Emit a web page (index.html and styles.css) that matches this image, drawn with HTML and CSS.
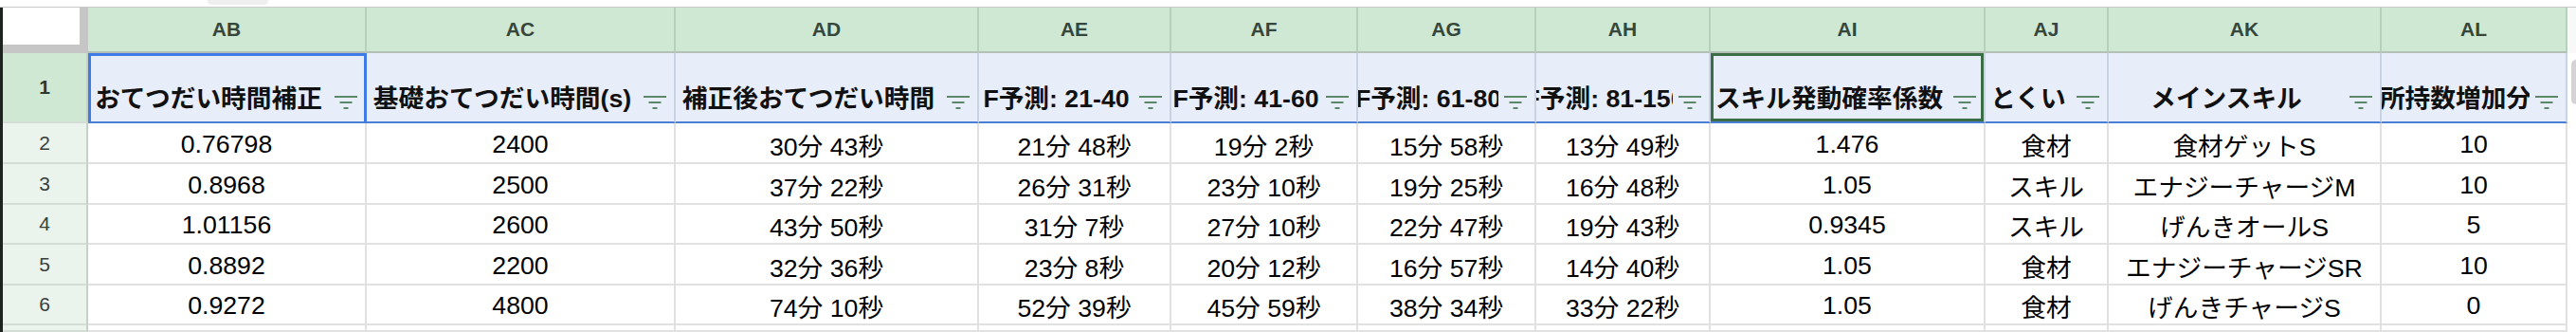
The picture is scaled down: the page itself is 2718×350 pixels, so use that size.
FILE: index.html
```html
<!DOCTYPE html>
<html lang="ja">
<head>
<meta charset="utf-8">
<title>Sheet</title>
<link rel="stylesheet" href="styles.css">
</head>
<body>
<div class="top"><div class="tab"></div></div>
<div class="sheet">
  <div class="corner"><div class="corner-box"></div></div>
  <div class="colh">AB</div>
  <div class="colh">AC</div>
  <div class="colh">AD</div>
  <div class="colh">AE</div>
  <div class="colh">AF</div>
  <div class="colh">AG</div>
  <div class="colh">AH</div>
  <div class="colh">AI</div>
  <div class="colh">AJ</div>
  <div class="colh">AK</div>
  <div class="colh">AL</div>
  <div class="colh edge"></div>

  <div class="rowh sel">1</div>
  <div class="hcell active"><div class="label"><span>おてつだい時間補正</span></div><svg class="filt" viewBox="0 0 24 14" width="24" height="14"><path d="M0 1h24M5.5 7h13M9.5 13h5"/></svg></div>
  <div class="hcell"><div class="label"><span>基礎おてつだい時間(s)</span></div><svg class="filt" viewBox="0 0 24 14" width="24" height="14"><path d="M0 1h24M5.5 7h13M9.5 13h5"/></svg></div>
  <div class="hcell"><div class="label"><span>補正後おてつだい時間</span></div><svg class="filt" viewBox="0 0 24 14" width="24" height="14"><path d="M0 1h24M5.5 7h13M9.5 13h5"/></svg></div>
  <div class="hcell"><div class="label"><span>F予測: 21-40</span></div><svg class="filt" viewBox="0 0 24 14" width="24" height="14"><path d="M0 1h24M5.5 7h13M9.5 13h5"/></svg></div>
  <div class="hcell"><div class="label"><span>F予測: 41-60</span></div><svg class="filt" viewBox="0 0 24 14" width="24" height="14"><path d="M0 1h24M5.5 7h13M9.5 13h5"/></svg></div>
  <div class="hcell"><div class="label"><span>F予測: 61-80</span></div><svg class="filt" viewBox="0 0 24 14" width="24" height="14"><path d="M0 1h24M5.5 7h13M9.5 13h5"/></svg></div>
  <div class="hcell"><div class="label"><span>F予測: 81-150</span></div><svg class="filt" viewBox="0 0 24 14" width="24" height="14"><path d="M0 1h24M5.5 7h13M9.5 13h5"/></svg></div>
  <div class="hcell focus"><div class="label"><span>スキル発動確率係数</span></div><svg class="filt" viewBox="0 0 24 14" width="24" height="14"><path d="M0 1h24M5.5 7h13M9.5 13h5"/></svg></div>
  <div class="hcell"><div class="label"><span>とくい</span></div><svg class="filt" viewBox="0 0 24 14" width="24" height="14"><path d="M0 1h24M5.5 7h13M9.5 13h5"/></svg></div>
  <div class="hcell"><div class="label"><span>メインスキル</span></div><svg class="filt" viewBox="0 0 24 14" width="24" height="14"><path d="M0 1h24M5.5 7h13M9.5 13h5"/></svg></div>
  <div class="hcell"><div class="label"><span>所持数増加分</span></div><svg class="filt" viewBox="0 0 24 14" width="24" height="14"><path d="M0 1h24M5.5 7h13M9.5 13h5"/></svg></div>
  <div class="hcell edge"><div class="scroll"></div></div>

  <div class="rowh">2</div>
  <div class="cell">0.76798</div><div class="cell">2400</div><div class="cell">30分 43秒</div><div class="cell">21分 48秒</div><div class="cell">19分 2秒</div><div class="cell">15分 58秒</div><div class="cell">13分 49秒</div><div class="cell">1.476</div><div class="cell">食材</div><div class="cell">食材ゲットS</div><div class="cell">10</div><div class="cell edge"></div>

  <div class="rowh">3</div>
  <div class="cell">0.8968</div><div class="cell">2500</div><div class="cell">37分 22秒</div><div class="cell">26分 31秒</div><div class="cell">23分 10秒</div><div class="cell">19分 25秒</div><div class="cell">16分 48秒</div><div class="cell">1.05</div><div class="cell">スキル</div><div class="cell">エナジーチャージM</div><div class="cell">10</div><div class="cell edge"></div>

  <div class="rowh">4</div>
  <div class="cell">1.01156</div><div class="cell">2600</div><div class="cell">43分 50秒</div><div class="cell">31分 7秒</div><div class="cell">27分 10秒</div><div class="cell">22分 47秒</div><div class="cell">19分 43秒</div><div class="cell">0.9345</div><div class="cell">スキル</div><div class="cell">げんきオールS</div><div class="cell">5</div><div class="cell edge"></div>

  <div class="rowh">5</div>
  <div class="cell">0.8892</div><div class="cell">2200</div><div class="cell">32分 36秒</div><div class="cell">23分 8秒</div><div class="cell">20分 12秒</div><div class="cell">16分 57秒</div><div class="cell">14分 40秒</div><div class="cell">1.05</div><div class="cell">食材</div><div class="cell">エナジーチャージSR</div><div class="cell">10</div><div class="cell edge"></div>

  <div class="rowh">6</div>
  <div class="cell">0.9272</div><div class="cell">4800</div><div class="cell">74分 10秒</div><div class="cell">52分 39秒</div><div class="cell">45分 59秒</div><div class="cell">38分 34秒</div><div class="cell">33分 22秒</div><div class="cell">1.05</div><div class="cell">食材</div><div class="cell">げんきチャージS</div><div class="cell">0</div><div class="cell edge"></div>

  <div class="rowh"></div>
  <div class="cell"></div><div class="cell"></div><div class="cell"></div><div class="cell"></div><div class="cell"></div><div class="cell"></div><div class="cell"></div><div class="cell"></div><div class="cell"></div><div class="cell"></div><div class="cell"></div><div class="cell edge"></div>
</div>
</body>
</html>
```

FILE: styles.css
```css
* { box-sizing: border-box; }

body {
  margin: 0;
  width: 2718px;
  height: 350px;
  overflow: hidden;
  background: #ffffff;
  font-family: "Liberation Sans", "Noto Sans CJK JP", sans-serif;
}

.top {
  height: 8px;
  display: flex;
  border-bottom: 1px solid #c9cbc9;
}

.tab {
  margin-left: 219px;
  width: 64px;
  height: 5px;
  background: #efefef;
  border-radius: 0 0 4px 4px;
}

.sheet {
  display: grid;
  grid-template-columns: 90px 294px 326px 320px 203px 197px 188px 184px 290px 130px 288px 196px 9px;
  grid-template-rows: 48px 74px 43px 43px 42px 43px 42px 7px;
  border-left: 3px solid #1d2420;
  height: 342px;
}

.corner {
  background: #c6c6c6;
}

.corner-box {
  width: 81px;
  height: 39px;
  background: #ffffff;
}

.colh {
  background: #cfe8d4;
  border-right: 2px solid #b9cfbd;
  border-bottom: 2px solid #b3c0b6;
  display: flex;
  align-items: center;
  justify-content: center;
  font-weight: bold;
  font-size: 21px;
  color: #36463a;
}

.colh.edge {
  background: #f7f8f7;
  border: none;
}

.rowh {
  background: #eaf4ec;
  border-right: 2px solid #c6d0c8;
  border-bottom: 2px solid #d3dcd5;
  display: flex;
  align-items: center;
  justify-content: center;
  font-size: 21px;
  color: #3a403c;
}

.rowh.sel {
  background: #cfe8d4;
  font-weight: bold;
  color: #2c3a30;
}

.hcell {
  background: #e8eef9;
  border-right: 2px solid #cad3e3;
  border-bottom: 2px solid #4a7fd6;
  display: flex;
  align-items: flex-end;
  font-weight: bold;
  font-size: 26.7px;
  color: #111111;
}

.hcell.active {
  border-right-color: #3f7be4;
  box-shadow: inset 3px 3px 0 #3f7be4, inset -1px 0 0 #3f7be4;
}

.hcell.focus {
  box-shadow: inset 0 0 0 3px #3b6e46;
}

.label {
  flex: 1;
  min-width: 0;
  display: flex;
  justify-content: center;
  overflow: hidden;
  line-height: 34px;
  padding-bottom: 7px;
}

.label span {
  white-space: nowrap;
  flex-shrink: 0;
}

.filt {
  flex-shrink: 0;
  margin: 0 8px 13px 6px;
  stroke: #5b8868;
  stroke-width: 2;
  fill: none;
}

.hcell.edge {
  background: #ffffff;
  border: none;
  align-items: flex-start;
  padding: 7px 0 0 4px;
}

.scroll {
  width: 5px;
  height: 47px;
  background: #d4d4d4;
  border-radius: 6px 0 0 6px;
}

.cell {
  border-right: 2px solid #e1e1e1;
  border-bottom: 2px solid #e1e1e1;
  display: flex;
  align-items: center;
  justify-content: center;
  padding-top: 3px;
  font-size: 26.7px;
  color: #000000;
  white-space: nowrap;
}

.cell.edge {
  border: none;
}
```
